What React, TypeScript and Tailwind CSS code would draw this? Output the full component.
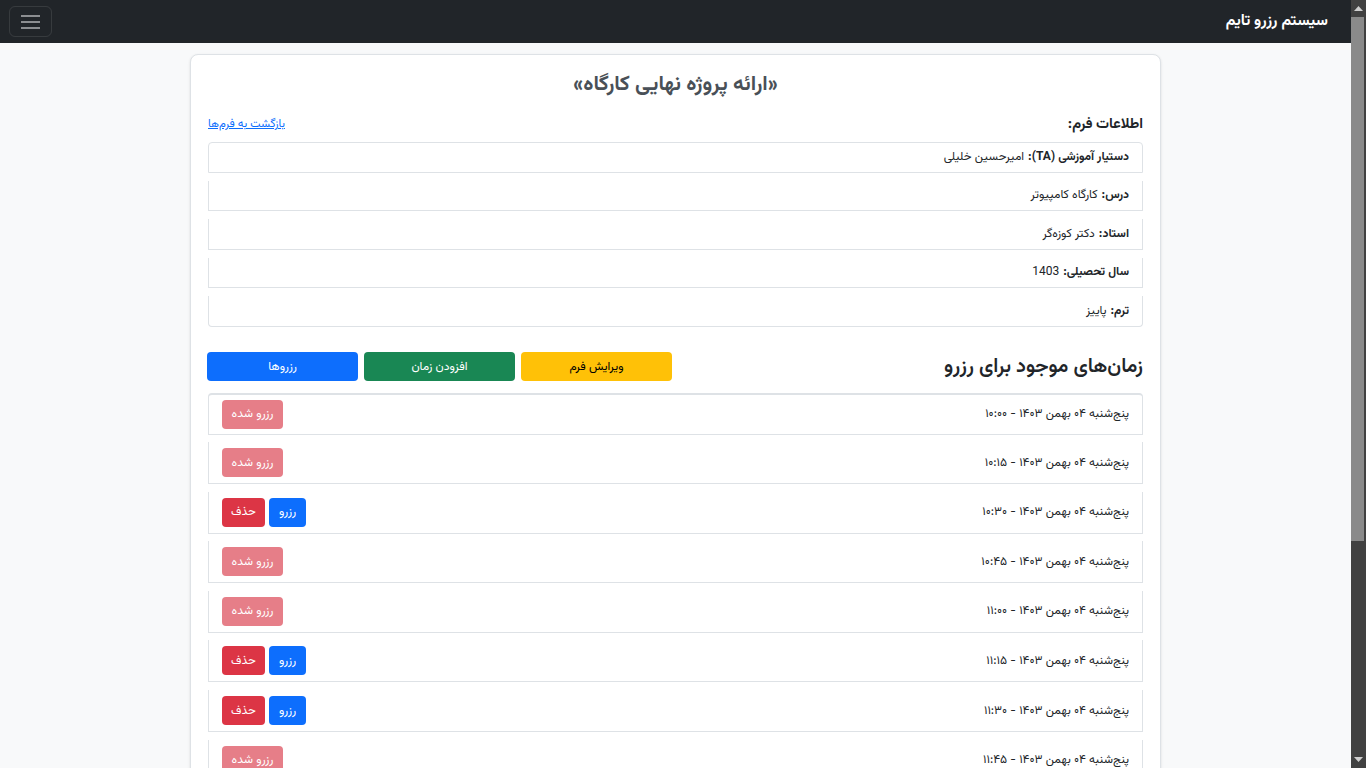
import { Fragment } from 'react'

const fa = (s: string) => s.replace(/[0-9]/g, (d) => '۰۱۲۳۴۵۶۷۸۹'[Number(d)])

const info = [
  { label: 'دستیار آموزشی (TA):', value: 'امیرحسین خلیلی' },
  { label: 'درس:', value: 'کارگاه کامپیوتر' },
  { label: 'استاد:', value: 'دکتر کوزه‌گر' },
  { label: 'سال تحصیلی:', value: '1403' },
  { label: 'ترم:', value: 'پاییز' },
]

const slots = [
  { time: '10:00', reserved: true },
  { time: '10:15', reserved: true },
  { time: '10:30', reserved: false },
  { time: '10:45', reserved: true },
  { time: '11:00', reserved: true },
  { time: '11:15', reserved: false },
  { time: '11:30', reserved: false },
  { time: '11:45', reserved: true },
  { time: '12:00', reserved: false },
  { time: '12:15', reserved: true },
]

export default function App() {
  return (
    <div className="h-screen flex overflow-hidden">
      <div
        dir="rtl"
        className="flex-1 overflow-hidden bg-[#f8f9fa] text-[#212529]"
        style={{ fontFamily: 'Vazirmatn, "Noto Sans Arabic", "DejaVu Sans", sans-serif' }}
      >
        {/* navbar */}
        <nav className="h-[43px] bg-[#212529] flex items-center justify-between pr-[23px] pl-[9px]">
          <span className="text-white text-[15.5px] font-bold">سیستم رزرو تایم</span>
          <button className="w-[43px] h-[31px] border border-white/10 rounded-md flex flex-col items-center justify-center gap-[4px]">
            <span className="block w-[19px] h-[2px] bg-[#8c8e91]" />
            <span className="block w-[19px] h-[2px] bg-[#8c8e91]" />
            <span className="block w-[19px] h-[2px] bg-[#8c8e91]" />
          </button>
        </nav>

        {/* card */}
        <div className="w-[971px] mx-auto mt-[11px] mb-10 bg-white border border-[#dee2e6] rounded-lg shadow-sm px-[17px] pt-[16px] pb-[16px]">
          <h2 className="text-center text-[21px] leading-[28px] font-bold text-[#495057]">«ارائه پروژه نهایی کارگاه»</h2>

          <div className="mt-[15px] flex items-center justify-between h-[22px]">
            <h5 className="text-[14.5px] font-bold">اطلاعات فرم:</h5>
            <a href="#" className="text-[11.5px] text-[#0d6efd] underline">بازگشت به فرم‌ها</a>
          </div>

          <ul className="mt-[6px]">
            {info.map((it, i) => (
              <li
                key={it.label}
                className={`h-[30.5px] mb-[8px] border border-[#dee2e6] flex items-center px-[13px] text-[12px] ${
                  i === 0 ? 'rounded-t' : 'border-t-0'
                } ${i === info.length - 1 ? 'rounded-b' : ''}`}
              >
                <strong className="font-bold">{it.label}</strong>
                <span className="mr-1">{it.value}</span>
              </li>
            ))}
          </ul>

          <div className="mt-[25px] flex items-center justify-between">
            <h4 className="text-[20px] font-semibold">زمان‌های موجود برای رزرو</h4>
            <div className="flex gap-[6px] ml-[-1px]">
              <button className="w-[151px] h-[29px] rounded bg-[#ffc107] text-black text-[12px]">ویرایش فرم</button>
              <button className="w-[151px] h-[29px] rounded bg-[#198754] text-white text-[12px]">افزودن زمان</button>
              <button className="w-[151px] h-[29px] rounded bg-[#0d6efd] text-white text-[12px]">رزروها</button>
            </div>
          </div>

          <ul className="mt-[11px]">
            {slots.map((s, i) => (
              <li
                key={s.time}
                className={`h-[42px] mb-[7.6px] border border-[#dee2e6] flex items-center justify-between px-[13px] text-[12px] ${
                  i === 0 ? 'rounded-t border-t-2' : 'border-t-0'
                }`}
              >
                <span>{fa(`پنج‌شنبه 04 بهمن 1403 - ${s.time}`)}</span>
                <div className="flex gap-[4px]">
                  {s.reserved ? (
                    <button className="w-[61px] h-[29px] rounded bg-[#e67e88] text-white text-[12px]">رزرو شده</button>
                  ) : (
                    <Fragment>
                      <button className="w-[37px] h-[29px] rounded bg-[#0d6efd] text-white text-[12px]">رزرو</button>
                      <button className="w-[43px] h-[29px] rounded bg-[#dc3545] text-white text-[12px]">حذف</button>
                    </Fragment>
                  )}
                </div>
              </li>
            ))}
          </ul>
        </div>
      </div>

      {/* scrollbar */}
      <div className="w-[15px] shrink-0 bg-[#414141] flex flex-col">
        <div className="h-[17px] flex items-center justify-center">
          <svg width="9" height="5" viewBox="0 0 9 5"><path d="M0 5L4.5 0L9 5Z" fill="#cfcfcf" /></svg>
        </div>
        <div className="h-[524px] ml-0 mr-[2px] bg-[#8a8a8a]" />
        <div className="flex-1" />
        <div className="h-[17px] flex items-center justify-center">
          <svg width="9" height="5" viewBox="0 0 9 5"><path d="M0 0L4.5 5L9 0Z" fill="#cfcfcf" /></svg>
        </div>
      </div>
    </div>
  )
}
